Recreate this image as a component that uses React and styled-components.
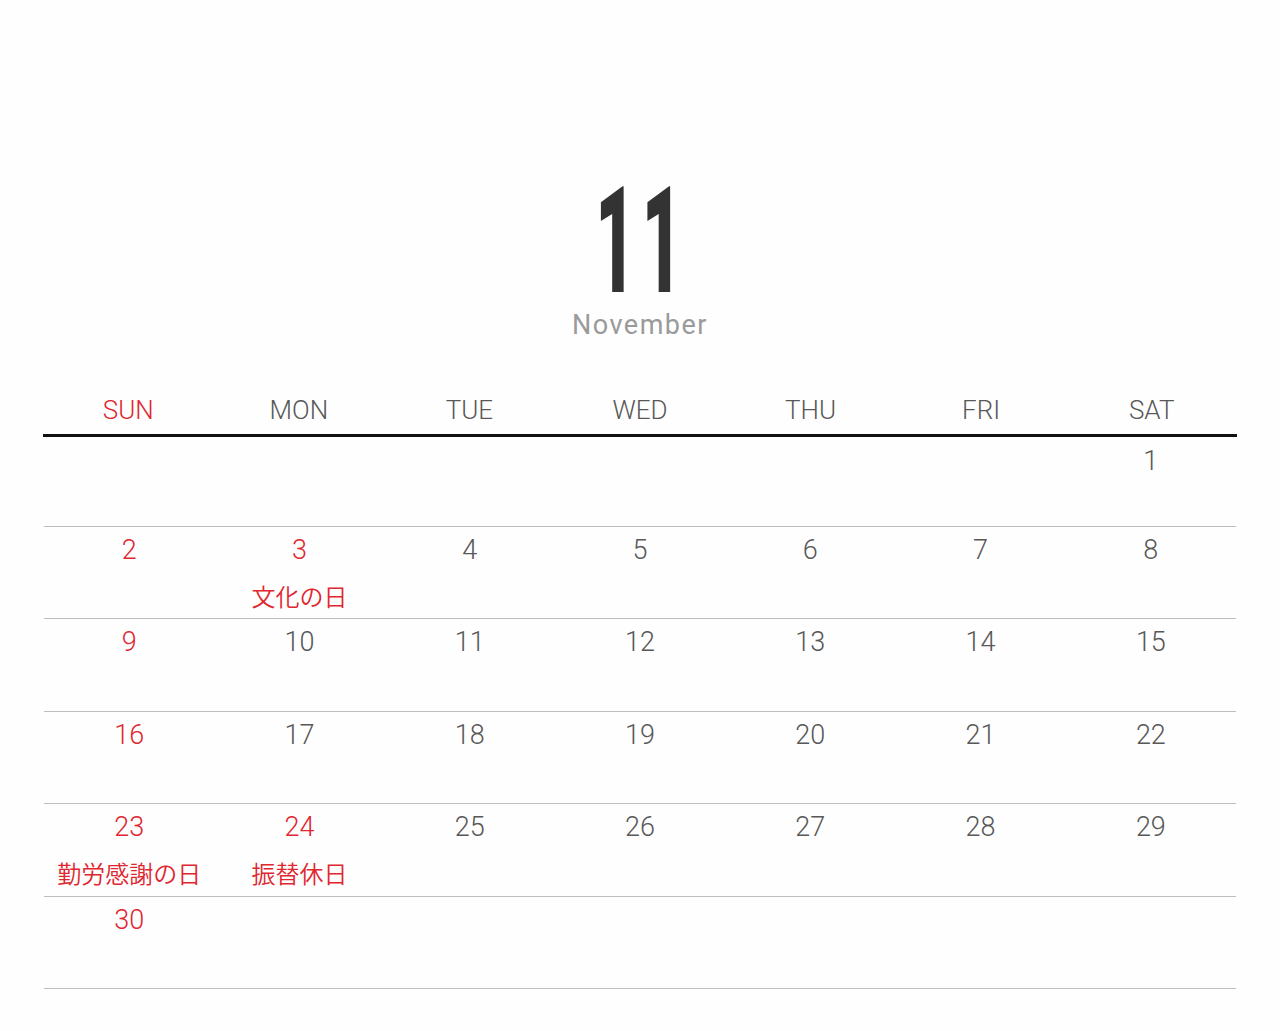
import styled, { createGlobalStyle } from "styled-components";

const GlobalStyle = createGlobalStyle`
  html, body {
    margin: 0;
    padding: 0;
    background: #fefefe;
  }
  body {
    font-family: Roboto, "Noto Sans CJK JP", sans-serif;
  }
`;

const RED = "#e0262f";
const GRAY = "#585858";

const Page = styled.div`
  min-height: 1031px;
  padding-top: 176px;
  box-sizing: border-box;
`;

const Title = styled.header`
  display: flex;
  flex-direction: column;
  align-items: center;
`;

const MonthNumber = styled.div`
  font-family: Roboto, sans-serif;
  font-weight: 900;
  font-size: 148px;
  line-height: 132px;
  letter-spacing: 13px;
  color: #333;
  transform: translateX(2px) scaleX(0.47);
  transform-origin: center;
`;

const MonthName = styled.div`
  margin-top: 2px;
  font-family: Roboto, sans-serif;
  font-size: 27px;
  line-height: 30px;
  letter-spacing: 1.5px;
  color: #9a9a9a;
`;

const Calendar = styled.div`
  width: 1192px;
  margin: 55px auto 0;
`;

const WeekHeader = styled.div`
  display: grid;
  grid-template-columns: repeat(7, 1fr);
  border-bottom: 3px solid #111;
  margin: 0 -1px;
`;

const DayName = styled.div`
  text-align: center;
  font-family: Roboto, sans-serif;
  font-weight: 300;
  font-size: 26px;
  line-height: 30px;
  padding: 0 0 9px;
  color: ${(p) => (p.$red ? RED : GRAY)};
`;

const Week = styled.div`
  display: grid;
  grid-template-columns: repeat(7, 1fr);
  height: ${(p) => (p.$first ? "90px" : "92.4px")};
  box-sizing: border-box;
  border-bottom: 1px solid #bdbdbd;
`;

const Cell = styled.div`
  display: flex;
  flex-direction: column;
  align-items: center;
  padding-top: ${(p) => (p.$first ? "9px" : "8px")};
`;

const DateNum = styled.span`
  font-family: Roboto, sans-serif;
  font-weight: 300;
  font-size: 27px;
  line-height: 30px;
  color: ${(p) => (p.$red ? RED : GRAY)};
`;

const Holiday = styled.span`
  margin-top: 16px;
  font-family: "Noto Sans CJK JP", sans-serif;
  font-weight: 350;
  font-size: 24px;
  line-height: 30px;
  color: ${RED};
  white-space: nowrap;
`;

const days = ["SUN", "MON", "TUE", "WED", "THU", "FRI", "SAT"];

const holidays = {
  3: "文化の日",
  23: "勤労感謝の日",
  24: "振替休日",
};

// November starts on Saturday
const buildWeeks = () => {
  const cells = [];
  for (let i = 0; i < 6; i++) cells.push(null);
  for (let d = 1; d <= 30; d++) cells.push(d);
  while (cells.length % 7) cells.push(null);
  const weeks = [];
  for (let i = 0; i < cells.length; i += 7) weeks.push(cells.slice(i, i + 7));
  return weeks;
};

export default function App() {
  const weeks = buildWeeks();
  return (
    <>
      <GlobalStyle />
      <Page>
        <Title>
          <MonthNumber>11</MonthNumber>
          <MonthName>November</MonthName>
        </Title>
        <Calendar>
          <WeekHeader>
            {days.map((d, i) => (
              <DayName key={d} $red={i === 0}>
                {d}
              </DayName>
            ))}
          </WeekHeader>
          {weeks.map((week, wi) => (
            <Week key={wi} $first={wi === 0}>
              {week.map((d, di) => (
                <Cell key={di} $first={wi === 0}>
                  {d && (
                    <DateNum $red={di === 0 || holidays[d]}>{d}</DateNum>
                  )}
                  {d && holidays[d] && <Holiday>{holidays[d]}</Holiday>}
                </Cell>
              ))}
            </Week>
          ))}
        </Calendar>
      </Page>
    </>
  );
}
